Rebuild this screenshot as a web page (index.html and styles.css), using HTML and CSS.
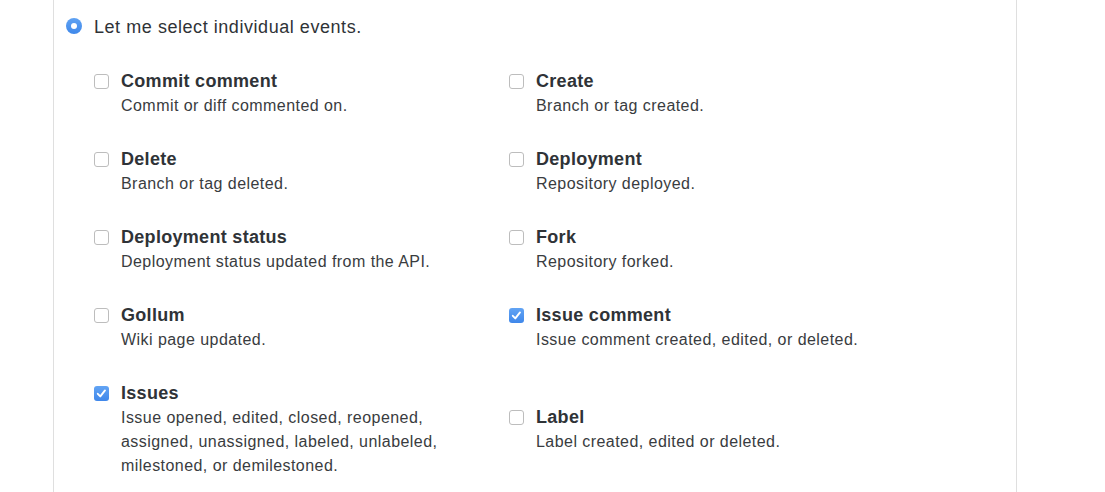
FILE: index.html
```html
<!DOCTYPE html>
<html>
<head>
<meta charset="utf-8">
<link rel="stylesheet" href="styles.css">
</head>
<body>
<div class="panel">
  <label class="radio-row">
    <span class="radio"><span class="dot"></span></span>
    <span class="radio-label">Let me select individual events.</span>
  </label>
  <div class="events">
    <div class="event">
      <span class="cb"></span>
      <div class="text"><div class="title">Commit comment</div><div class="desc">Commit or diff commented on.</div></div>
    </div>
    <div class="event">
      <span class="cb"></span>
      <div class="text"><div class="title">Create</div><div class="desc">Branch or tag created.</div></div>
    </div>
    <div class="event">
      <span class="cb"></span>
      <div class="text"><div class="title">Delete</div><div class="desc">Branch or tag deleted.</div></div>
    </div>
    <div class="event">
      <span class="cb"></span>
      <div class="text"><div class="title">Deployment</div><div class="desc">Repository deployed.</div></div>
    </div>
    <div class="event">
      <span class="cb"></span>
      <div class="text"><div class="title">Deployment status</div><div class="desc">Deployment status updated from the API.</div></div>
    </div>
    <div class="event">
      <span class="cb"></span>
      <div class="text"><div class="title">Fork</div><div class="desc">Repository forked.</div></div>
    </div>
    <div class="event">
      <span class="cb"></span>
      <div class="text"><div class="title">Gollum</div><div class="desc">Wiki page updated.</div></div>
    </div>
    <div class="event">
      <span class="cb checked"><svg viewBox="0 0 15 15" width="15" height="15"><polyline points="3.8,7.8 6.3,10.4 11,4.4" fill="none" stroke="#fff" stroke-width="1.9" stroke-linecap="round" stroke-linejoin="round"/></svg></span>
      <div class="text"><div class="title">Issue comment</div><div class="desc">Issue comment created, edited, or deleted.</div></div>
    </div>
    <div class="event">
      <span class="cb checked"><svg viewBox="0 0 15 15" width="15" height="15"><polyline points="3.8,7.8 6.3,10.4 11,4.4" fill="none" stroke="#fff" stroke-width="1.9" stroke-linecap="round" stroke-linejoin="round"/></svg></span>
      <div class="text"><div class="title">Issues</div><div class="desc">Issue opened, edited, closed, reopened,<br>assigned, unassigned, labeled, unlabeled,<br>milestoned, or demilestoned.</div></div>
    </div>
    <div class="event shifted">
      <span class="cb"></span>
      <div class="text"><div class="title">Label</div><div class="desc">Label created, edited or deleted.</div></div>
    </div>
  </div>
</div>
</body>
</html>
```

FILE: styles.css
```css
html, body {
  margin: 0;
  padding: 0;
  background: #fff;
}
body {
  font-family: "Liberation Sans", Arial, sans-serif;
  color: #2f3337;
  overflow: hidden;
}
.panel {
  margin-left: 53px;
  width: 962px;
  min-height: 492px;
  border-left: 1px solid #dfdfdf;
  border-right: 1px solid #dfdfdf;
  padding-top: 14px;
  box-sizing: content-box;
}
.radio-row {
  display: flex;
  align-items: flex-start;
  margin-left: 12px;
  height: 26px;
}
.radio {
  width: 16px;
  height: 16px;
  border-radius: 50%;
  background: linear-gradient(#5fa2f3, #3f88ea);
  margin-top: 4px;
  display: flex;
  align-items: center;
  justify-content: center;
  flex: none;
}
.radio .dot {
  width: 6px;
  height: 6px;
  border-radius: 50%;
  background: #fff;
}
.radio-label {
  margin-left: 12px;
  font-size: 18px;
  line-height: 26px;
  letter-spacing: 0.55px;
  color: #2f3337;
}
.events {
  display: grid;
  grid-template-columns: 415px 415px;
  row-gap: 28px;
  padding-left: 40px;
  margin-top: 28px;
  align-items: start;
}
.event {
  display: flex;
  align-items: flex-start;
}
.event.shifted {
  margin-top: 24px;
}
.cb {
  width: 15px;
  height: 15px;
  box-sizing: border-box;
  border: 1px solid #bdbdbd;
  border-radius: 3px;
  background: #fff;
  margin-top: 6px;
  flex: none;
  display: block;
}
.cb svg {
  display: block;
}
.cb.checked {
  border: none;
  background: linear-gradient(#62a4f4, #3f87ea);
}
.text {
  margin-left: 12px;
}
.title {
  font-size: 18px;
  font-weight: bold;
  line-height: 26px;
  letter-spacing: 0.3px;
  color: #2f3337;
}
.desc {
  font-size: 16px;
  line-height: 24px;
  letter-spacing: 0.45px;
  color: #393c40;
}
```
